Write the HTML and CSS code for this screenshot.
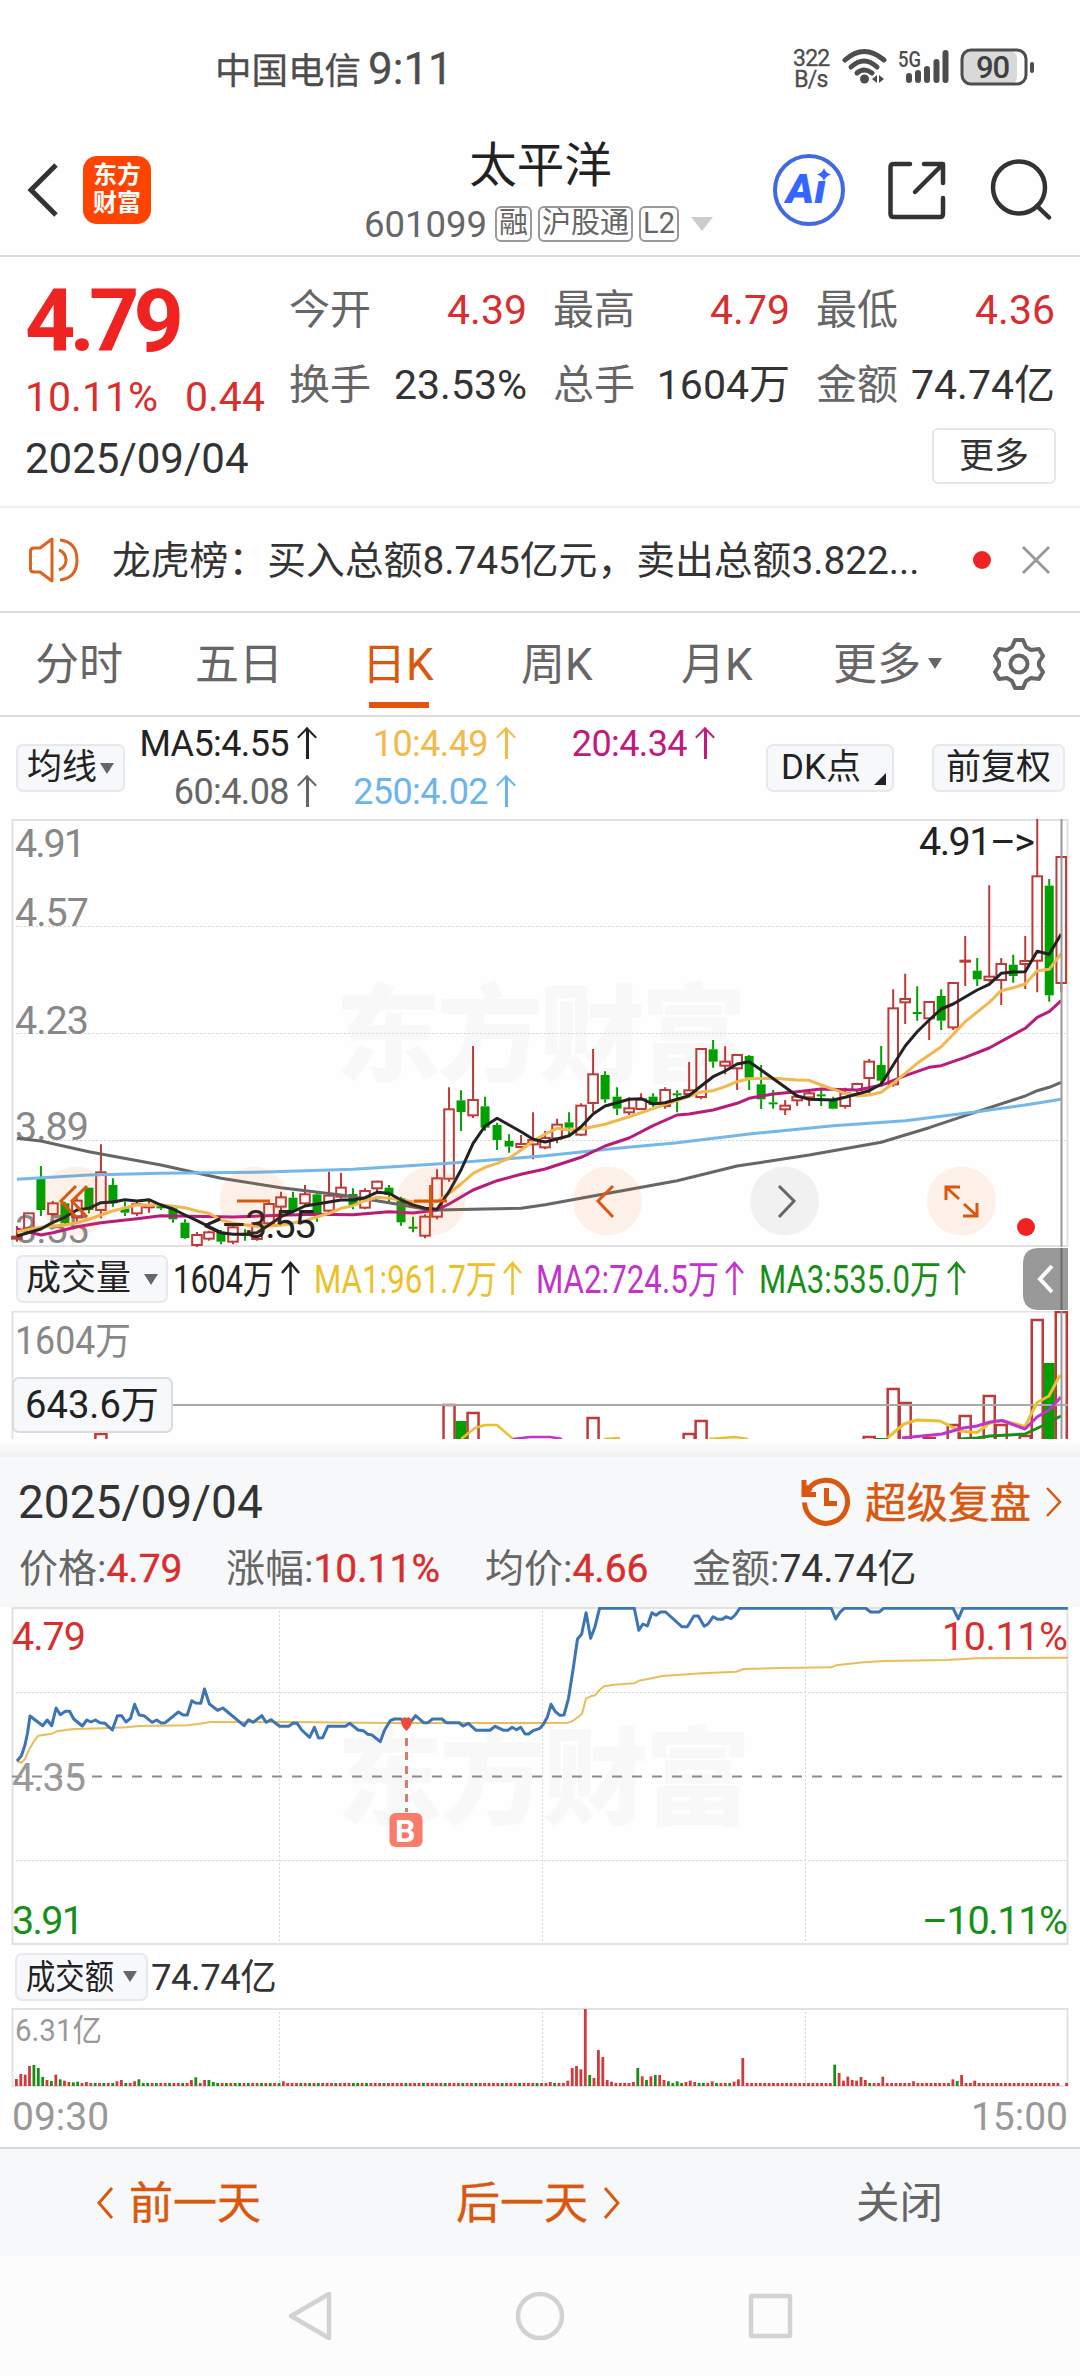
FILE: index.html
```html
<!DOCTYPE html>
<html lang="zh-CN">
<head>
<meta charset="utf-8">
<title>太平洋 601099</title>
<link rel="stylesheet" href="styles.css">
</head>
<body>
<div class="status">
 <span class="carrier">中国电信</span>
 <span class="clock">9:11</span>
 <span class="speed">322<br>B/s</span>
 <svg class="sysicons" width="200" height="44" viewBox="0 0 200 44">
  <g fill="none" stroke="#4d4d4d" stroke-width="5" stroke-linecap="round">
   <path d="M4 13 Q23 -4 43 13"/>
   <path d="M10 20 Q23 8 36 20"/>
   <path d="M16 26 Q23 20 31 26"/>
  </g>
  <circle cx="23.500" cy="32" r="4.500" fill="#4d4d4d"/>
  <path d="M31 32l5-4v8zM43 32l-5-4v8z" fill="#4d4d4d"/>
  <text class="net" x="57" y="20" textLength="23" lengthAdjust="spacingAndGlyphs">5G</text>
  <g stroke="#4d4d4d" stroke-width="6" stroke-linecap="round">
   <path d="M68 29v4M77 26v7M86 22v11M95.500 15v18M104.500 6v27"/>
  </g>
  <rect x="122" y="4" width="54" height="33" rx="7" fill="#d9d9d9"/>
  <rect x="121" y="3" width="64" height="34" rx="9" fill="none" stroke="#4d4d4d" stroke-width="3"/>
  <rect x="189" y="15" width="4" height="11" rx="2" fill="#4d4d4d"/>
  <text class="batt" x="135" y="31" textLength="34">90</text>
 </svg>
</div>

<div class="header">
 <svg class="back" width="34" height="56" viewBox="0 0 34 56"><path d="M30 3 L5 28 L30 53" fill="none" stroke="#333" stroke-width="5"/></svg>
 <div class="logo">东方<br>财富</div>
 <div class="title">
  <div class="name">太平洋</div>
  <div class="code">
   <span>601099</span>
   <i class="tag">融</i><i class="tag">沪股通</i><i class="tag">L2</i>
   <b class="down"></b>
  </div>
 </div>
 <svg class="tools" width="290" height="80" viewBox="0 0 290 80">
  <circle cx="40" cy="40" r="34" fill="none" stroke="#4169e1" stroke-width="4"/>
  <text class="ai" x="17" y="53" textLength="40" lengthAdjust="spacingAndGlyphs">Aı</text>
  <path d="M55 18 Q56.500 23 62 24.500 Q56.500 26 55 31 Q53.500 26 48 24.500 Q53.500 23 55 18z" fill="#3566ff"/>
  <g fill="none" stroke="#333" stroke-width="4.500" stroke-linecap="round" stroke-linejoin="round">
   <path d="M141 14H125Q121.500 14 121.500 17V64Q121.500 67 125 67H171Q174 67 174 64V48"/>
   <path d="M155 14H174V33M173 15L146 42"/>
   <circle cx="250" cy="37.500" r="26"/>
   <path d="M268 56L280 67.500"/>
  </g>
 </svg>
</div>

<div class="quote">
 <div class="last">
  <div class="price">4.79</div>
  <div class="change"><span>10.11%</span><span>0.44</span></div>
 </div>
 <div class="stats">
  <div class="stat"><span>今开</span><b class="up">4.39</b></div>
  <div class="stat"><span>最高</span><b class="up">4.79</b></div>
  <div class="stat"><span>最低</span><b class="up">4.36</b></div>
  <div class="stat"><span>换手</span><b>23.53%</b></div>
  <div class="stat"><span>总手</span><b>1604万</b></div>
  <div class="stat"><span>金额</span><b>74.74亿</b></div>
 </div>
 <div class="dateline"><span>2025/09/04</span><button class="more">更多</button></div>
</div>

<div class="notice">
 <svg width="54" height="50" viewBox="0 0 54 50" fill="none" stroke="#d9651f" stroke-width="3">
  <path d="M2.500 16Q2.500 13 6 13H12L24 4V46L12 37H6Q2.500 37 2.500 34z" stroke-linejoin="round"/>
  <path d="M31 15Q38 18 38 25Q38 32 31 35M32 5Q49 7 49 25Q49 43 32 45"/>
 </svg>
 <span class="noticetext">龙虎榜：买入总额8.745亿元，卖出总额3.822...</span>
 <b class="reddot"></b>
 <svg width="32" height="32" viewBox="0 0 32 32"><path d="M3 3L29 29M29 3L3 29" stroke="#999" stroke-width="3"/></svg>
</div>

<div class="tabs">
 <span>分时</span>
 <span>五日</span>
 <span class="active">日K</span>
 <span>周K</span>
 <span>月K</span>
 <span>更多<b class="small-down"></b></span>
 <svg width="54" height="54" viewBox="0 0 54 54" fill="none" stroke="#666" stroke-width="4" stroke-linejoin="round">
  <path d="M23 3H31L34 10L39 13L47 12L51 19L47 25V29L51 35L47 42L39 41L34 44L31 51H23L20 44L15 41L7 42L3 35L7 29V25L3 19L7 12L15 13L20 10z"/>
  <circle cx="27" cy="27" r="8.500"/>
 </svg>
</div>

<div class="indicator">
 <button class="chip">均线<b class="small-down"></b></button>
 <div class="averages">
  <span class="ma5">MA5:4.55<i></i></span>
  <span class="ma10">10:4.49<i></i></span>
  <span class="ma20">20:4.34<i></i></span>
  <span class="ma60">60:4.08<i></i></span>
  <span class="ma250">250:4.02<i></i></span>
 </div>
 <button class="chip dk">DK点<b class="corner"></b></button>
 <button class="chip fq">前复权</button>
</div>

<svg class="kchart" viewBox="0 819 1080 428" width="1080" height="428">
 <text class="mark" x="335" y="1073" textLength="412">东方财富</text>
 <path class="grid" d="M12 926.500H1068M12 1033.500H1068M12 1140.500H1068"/>
 <rect class="frame" x="12.500" y="820" width="1055" height="426"/>
 <g class="axis">
  <text x="15" y="857" textLength="71">4.91</text>
  <text x="15" y="926" textLength="74">4.57</text>
  <text x="15" y="1034" textLength="74">4.23</text>
  <text x="15" y="1140" textLength="74">3.89</text>
  <text x="15" y="1243" textLength="74">3.55</text>
 </g>
 <g id="candles"></g>
 <g id="lines"></g>
 <g class="axis dark">
  <text x="919" y="855" textLength="116">4.91–&gt;</text>
  <text x="203" y="1238" textLength="113">&lt;–3.55</text>
 </g>
 <g fill="#f5651a" fill-opacity=".09">
  <circle cx="76" cy="1201" r="34.500"/><circle cx="254" cy="1201" r="34.500"/><circle cx="431" cy="1201" r="34.500"/>
  <circle cx="607.500" cy="1201" r="34.500"/><circle cx="961.500" cy="1201" r="34.500"/>
 </g>
 <circle cx="784.500" cy="1201" r="34.500" fill="#000" fill-opacity=".05"/>
 <g fill="none" stroke="#d9580f" stroke-width="3">
  <path d="M76 1186L61 1201L76 1217M87 1186L72 1201L87 1217"/>
  <path d="M237 1201H270M414 1201H447M430.500 1185V1217"/>
  <path d="M613 1186L598 1201L613 1217"/>
  <path d="M946 1200V1187H960M947 1188L959 1199M963 1216H977V1203M976 1215L964 1204"/>
  <path d="M779 1186L794 1201L779 1217" stroke="#666"/>
 </g>
 <circle cx="1026" cy="1227" r="9" fill="#f02323"/>
 <path d="M1061.500 819V1247" stroke="#999" stroke-width="2"/>
</svg>

<div class="volhead">
 <button class="chip">成交量<b class="small-down"></b></button>
 <svg width="850" height="64" viewBox="170 1247 850 64">
  <g class="vals">
   <text x="173" y="1293" textLength="101" lengthAdjust="spacingAndGlyphs" fill="#222">1604万</text>
   <text x="314" y="1293" textLength="183" lengthAdjust="spacingAndGlyphs" fill="#ebc12a">MA1:961.7万</text>
   <text x="536" y="1293" textLength="183" lengthAdjust="spacingAndGlyphs" fill="#c333cb">MA2:724.5万</text>
   <text x="759" y="1293" textLength="182" lengthAdjust="spacingAndGlyphs" fill="#178e17">MA3:535.0万</text>
  </g>
  <g fill="none" stroke-width="2.500">
   <path stroke="#222" d="M290.500 1295V1264M282 1273L290.500 1263L299 1273"/>
   <path stroke="#ebc12a" d="M512.500 1295V1264M504 1273L512.500 1263L521 1273"/>
   <path stroke="#c333cb" d="M734.500 1295V1264M726 1273L734.500 1263L743 1273"/>
   <path stroke="#178e17" d="M956.500 1295V1264M948 1273L956.500 1263L965 1273"/>
  </g>
 </svg>
 <svg class="drawer" width="45" height="62" viewBox="0 0 45 62">
  <path d="M45 0H16Q0 0 0 16V46Q0 62 16 62H45z" fill="#999"/>
  <path d="M29 18L17 31L29 44" fill="none" stroke="#fff" stroke-width="4"/>
  <path d="M38.500 0V62" stroke="#6b6b6b" stroke-width="2"/>
 </svg>
</div>

<svg class="volchart" viewBox="0 1311 1080 128" width="1080" height="128">
 <path d="M12.500 1439V1311.500H1067.500V1439" class="frame"/>
 <text class="axis" x="15" y="1354" textLength="116" lengthAdjust="spacingAndGlyphs">1604万</text>
 <g id="volumes"></g>
 <path d="M170 1405H1068" stroke="#aaa" stroke-width="2"/>
 <g id="vollines"></g>
 <path d="M1061.500 1311V1439" stroke="#999" stroke-width="2"/>
 <rect x="13" y="1378" width="159" height="54" rx="6" fill="#f7f8fa" stroke="#d9dce0" stroke-width="2"/>
 <text class="axis dark" x="25" y="1418" textLength="134" lengthAdjust="spacingAndGlyphs">643.6万</text>
</svg>
<div class="shade"></div>

<div class="panel">
 <div class="panelhead">
  <span>2025/09/04</span>
  <a class="replay">
   <svg width="50" height="50" viewBox="0 0 50 50" fill="none" stroke="#d9580f" stroke-width="5">
    <path d="M3.500 25.500A21.500 21.500 0 1 0 7 13"/>
    <path d="M3 3V17.500H15M25.500 11V26.500H36"/>
    <path d="M3 17L9 10" stroke-width="7"/>
   </svg>
   <span>超级复盘</span>
   <svg width="18" height="30" viewBox="0 0 18 30"><path d="M2 1L15 15L2 29" fill="none" stroke="#d9580f" stroke-width="2.500"/></svg>
  </a>
 </div>
 <div class="panelvals">
  <span>价格:<b class="up">4.79</b></span>
  <span>涨幅:<b class="up">10.11%</b></span>
  <span>均价:<b class="up">4.66</b></span>
  <span>金额:<b>74.74亿</b></span>
 </div>
</div>

<svg class="daychart" viewBox="0 1607 1080 338" width="1080" height="338">
 <text class="mark" x="337" y="1816" textLength="414">东方财富</text>
 <path class="grid" d="M12 1692.500H1068M12 1860.500H1068M279.500 1607V1945M542.500 1607V1945M805.500 1607V1945"/>
 <path d="M12.500 1608H1067.500V1944H12.500z" class="frame"/>
 <path d="M12 1776.500H1068" stroke="#8c8c8c" stroke-width="2" stroke-dasharray="10 10"/>
 <g id="daylines"></g>
 <g class="axis">
  <text x="12" y="1650" textLength="74" fill="#d82e2e">4.79</text>
  <text x="12" y="1791" textLength="74" fill="#999">4.35</text>
  <text x="12" y="1934" textLength="72" fill="#178e17">3.91</text>
  <text x="942" y="1650" textLength="126" fill="#d82e2e">10.11%</text>
  <text x="922" y="1934" textLength="146" fill="#178e17">–10.11%</text>
 </g>
 <path d="M406.500 1738V1812" stroke="#dd7a6e" stroke-width="3" stroke-dasharray="8 6"/>
 <path d="M406.500 1731Q399 1724 402 1719Q404 1716 406.500 1718Q409 1716 411 1719Q414 1724 406.500 1731z" fill="#ee4a3b"/>
 <rect x="389.500" y="1813" width="33" height="34" rx="6" fill="#f97b6a"/>
 <text class="buy" x="395" y="1842" textLength="22">B</text>
</svg>

<div class="amount">
 <button class="chip"><svg width="88" height="44" viewBox="0 0 88 44"><text class="sel" x="0" y="34" textLength="88" lengthAdjust="spacingAndGlyphs">成交额</text></svg><b class="small-down"></b></button>
 <span>74.74亿</span>
</div>
<svg class="amtchart" viewBox="0 2008 1080 79" width="1080" height="79">
 <path class="grid" d="M279.500 2008V2086M542.500 2008V2086M805.500 2008V2086"/>
 <rect class="frame" x="12.500" y="2009" width="1055" height="77"/>
 <text class="axis" x="15" y="2041" textLength="87" lengthAdjust="spacingAndGlyphs">6.31亿</text>
 <g id="amounts"></g>
</svg>
<div class="times"><span>09:30</span><span>15:00</span></div>

<div class="daynav">
 <a class="prev"><svg width="20" height="34" viewBox="0 0 20 34"><path d="M17 2L4 17L17 32" fill="none" stroke="#d9580f" stroke-width="3"/></svg><span>前一天</span></a>
 <a class="next"><span>后一天</span><svg width="20" height="34" viewBox="0 0 20 34"><path d="M3 2L16 17L3 32" fill="none" stroke="#d9580f" stroke-width="3"/></svg></a>
 <a class="close"><span>关闭</span></a>
</div>
<div class="sysnav">
 <svg width="48" height="52" viewBox="0 0 48 52"><path d="M43 4V48L5 26z"/></svg>
 <svg width="52" height="52" viewBox="0 0 52 52"><circle cx="26" cy="26" r="22"/></svg>
 <svg width="48" height="52" viewBox="0 0 48 52"><rect x="5" y="6" width="39" height="40" rx="1"/></svg>
</div>
<script src="chart.js"></script>
</body>
</html>
```

FILE: styles.css
```css
body {
 margin: 0;
 width: 1080px;
 background: #fefefe;
 color: #333;
 font-family: Roboto, "Noto Sans CJK SC", sans-serif;
}
svg {
 display: block;
 flex: none;
}
button {
 font-family: inherit;
 padding: 0;
 margin: 0;
}
b, i {
 font-weight: normal;
 font-style: normal;
}
span, a {
 white-space: nowrap;
}
.up {
 color: #d82e2e;
}
.status {
 height: 138px;
 box-sizing: border-box;
 padding-left: 215px;
 display: flex;
 align-items: center;
 color: #4d4d4d;
 -webkit-text-stroke: 0.3px;
}
.carrier {
 font-size: 36.5px;
 width: 153px;
 padding-bottom: 2px;
}
.clock {
 font-size: 44px;
 width: 425px;
}
.speed {
 font-size: 23px;
 line-height: 21px;
 letter-spacing: -0.8px;
 text-align: center;
 width: 36px;
 margin-right: 12px;
}
.sysicons {
 -webkit-text-stroke: 0;
}
.sysicons .net {
 font-size: 22px;
 font-weight: 500;
 fill: #4d4d4d;
}
.sysicons .batt {
 font-size: 31px;
 font-weight: 500;
 fill: #404040;
}
.header {
 height: 119px;
 border-bottom: 2px solid #ddd;
 display: flex;
 box-sizing: border-box;
}
.back {
 margin: 24px 0 0 26px;
}
.logo {
 width: 68px;
 height: 68px;
 margin: 18px 0 0 23px;
 box-sizing: border-box;
 padding-top: 5px;
 background: #ff4400;
 border-radius: 14px;
 color: #fff;
 font-size: 24px;
 line-height: 28px;
 font-weight: 700;
 text-align: center;
}
.title {
 width: 618px;
 box-sizing: border-box;
 padding-left: 213px;
 flex: none;
}
.name {
 font-size: 47.5px;
 line-height: 56px;
 width: 353px;
 text-align: center;
 color: #222;
}
.code {
 display: flex;
 align-items: center;
 height: 60px;
 color: #666;
 font-size: 36.5px;
}
.code span {
 width: 131px;
}
.tag {
 box-sizing: border-box;
 height: 36px;
 border: 2px solid #999;
 border-radius: 6px;
 font-size: 29px;
 line-height: 31px;
 padding: 0 2px;
 margin-right: 6px;
}
.down {
 border: 11px solid transparent;
 border-top: 14px solid #ccc;
 border-bottom: 0;
 margin-left: 6px;
}
.tools {
 margin: 12px 0 0 0;
}
.ai {
 font-size: 41px;
 font-weight: 900;
 font-style: italic;
 fill: #3566ff;
}
.quote {
 height: 251px;
 border-bottom: 2px solid #eee;
 box-sizing: border-box;
 display: grid;
 grid-template-columns: 264px 791px;
 grid-template-rows: 166px 80px;
 padding-left: 25px;
}
.price {
 font-size: 88px;
 font-weight: 700;
 letter-spacing: -6px;
 line-height: 88px;
 padding-top: 20px;
 color: #f02323;
}
.change {
 color: #d82e2e;
 font-size: 41px;
 line-height: 64px;
 display: flex;
}
.change span:first-child {
 width: 160px;
}
.stats {
 display: grid;
 grid-template-columns: 238px 237px 239px;
 grid-auto-rows: 75px;
 column-gap: 26px;
 padding-top: 16px;
}
.stat {
 display: flex;
 justify-content: space-between;
 align-items: baseline;
 font-size: 41px;
 line-height: 75px;
}
.stat span {
 color: #666;
}
.dateline {
 grid-column: 1 / 3;
 width: 1031px;
 display: flex;
 justify-content: space-between;
 font-size: 42px;
 line-height: 71px;
}
.more {
 width: 124px;
 height: 56px;
 margin-top: 5px;
 border: 2px solid #e6e6e6;
 border-radius: 6px;
 background: #fff;
 font-size: 35px;
 line-height: 49px;
 color: #333;
}
.notice {
 height: 105px;
 box-sizing: border-box;
 border-bottom: 2px solid #ddd;
 display: flex;
 align-items: center;
 padding-left: 28px;
}
.noticetext {
 font-size: 38.8px;
 margin-left: 30px;
 width: 861px;
 padding-bottom: 6px;
}
.reddot {
 width: 18px;
 height: 18px;
 border-radius: 50%;
 background: #f02323;
 margin-right: 29px;
}
.tabs {
 height: 104px;
 box-sizing: border-box;
 border-bottom: 2px solid #ddd;
 display: grid;
 grid-template-columns: 160px 167px 159px 160px 152px 159px 54px;
 align-items: center;
 padding-left: 35px;
 font-size: 44px;
 color: #666;
}
.tabs span {
 height: 102px;
 line-height: 105px;
}
.tabs .active {
 color: #d9580f;
 background: linear-gradient(#e3550f, #e3550f) 7px 89px / 60px 6px no-repeat;
}
.small-down {
 display: inline-block;
 border: 7px solid transparent;
 border-top: 11px solid #666;
 border-bottom: 0;
 margin-left: 7px;
 vertical-align: 11px;
}
.indicator {
 height: 102px;
 display: flex;
 align-items: center;
 padding-left: 16px;
}
.chip {
 box-sizing: border-box;
 height: 48px;
 border: 2px solid #e6e8ee;
 border-radius: 7px;
 background: #f7f8fa;
 color: #222;
 font-size: 35px;
 line-height: 40px;
 display: flex;
 align-items: center;
 justify-content: center;
 flex: none;
}
.indicator .chip {
 width: 109px;
}
.chip .small-down {
 margin-left: 3px;
}
.indicator .dk {
 width: 128px;
 position: relative;
 padding-right: 18px;
 margin-left: 51px;
}
.indicator .fq {
 width: 133px;
 margin-left: 38px;
}
.corner {
 position: absolute;
 right: 6px;
 bottom: 5px;
 border-left: 12px solid transparent;
 border-bottom: 12px solid #222;
}
.averages {
 display: grid;
 grid-template-columns: 192px 199px 199px;
 grid-auto-rows: 48px;
 font-size: 36px;
 letter-spacing: -0.6px;
}
.averages span {
 display: flex;
 justify-content: flex-end;
 align-items: center;
}
.averages i {
 width: 3px;
 height: 30px;
 margin: 0 8px 0 17px;
 background: currentColor;
 position: relative;
}
/* arrow head of the trend mark */
.averages i:after {
 content: "";
 position: absolute;
 left: -6px;
 top: 1px;
 width: 12px;
 height: 12px;
 border-left: 2.5px solid;
 border-top: 2.5px solid;
 transform: rotate(45deg);
}
.ma5 { color: #222; }
.ma10 { color: #f3b94b; }
.ma20 { color: #c01a7c; }
.ma60 { color: #666; }
.ma250 { color: #6cb5ea; }
.mark {
 font-size: 106px;
 font-weight: 900;
 fill: #f8f8f8;
}
.grid {
 stroke: #d6d6d6;
 stroke-width: 1;
 stroke-dasharray: 2 2;
 fill: none;
}
.frame {
 stroke: #e2e2e2;
 stroke-width: 2;
 fill: none;
}
.axis {
 font-size: 39.5px;
 fill: #888;
}
.amtchart .axis {
 font-size: 31px;
 fill: #999;
}
.volchart .axis {
 font-size: 38px;
}
.axis.dark, .dark {
 fill: #222;
}
.volhead {
 height: 64px;
 display: flex;
 align-items: center;
 padding-left: 16px;
}
.volhead .chip {
 width: 152px;
 margin-right: 2px;
}
.volhead .small-down {
 margin-left: 13px;
}
.volhead .drawer {
 margin-left: 3px;
}
.vals {
 font-size: 38.5px;
}
.sel {
 font-size: 34px;
 fill: #222;
}
text {
 white-space: pre;
}
.shade {
 height: 18px;
 background: linear-gradient(#fefefe, #f1f1f2);
}
.panel {
 height: 150px;
 background: #f7f8fa;
}
.panelhead {
 height: 90px;
 display: flex;
 align-items: center;
 justify-content: space-between;
 padding: 0 17px 0 18px;
 font-size: 46px;
}
.replay {
 display: flex;
 align-items: center;
 color: #d9580f;
 font-size: 41.5px;
 gap: 14px;
}
.replay span {
 padding-bottom: 5px;
 -webkit-text-stroke: 0.4px;
}
.panelvals {
 display: grid;
 grid-template-columns: 207px 259px 207px 300px;
 padding-left: 19px;
 font-size: 39px;
 line-height: 44px;
 color: #666;
}
.panelvals b {
 color: #333;
}
.panelvals .up {
 color: #d82e2e;
 -webkit-text-stroke: 0.4px;
}
.buy {
 font-size: 32px;
 font-weight: 700;
 fill: #fff;
}
.amount {
 height: 63px;
 display: flex;
 align-items: center;
 padding-left: 15px;
 font-size: 36.5px;
 letter-spacing: -0.5px;
}
.amount span {
 padding-bottom: 5px;
}
.amount .chip {
 width: 133px;
 margin-right: 3px;
}
.amount .small-down {
 margin-left: 9px;
}
.times {
 height: 60px;
 padding: 0 12px;
 display: flex;
 justify-content: space-between;
 align-items: center;
 font-size: 39px;
 color: #999;
}
.daynav {
 height: 109px;
 box-sizing: border-box;
 border-top: 2px solid #d9dadc;
 background: #f7f8fa;
 display: flex;
 align-items: center;
 font-size: 44px;
 color: #d9580f;
}
.daynav a {
 display: flex;
 align-items: center;
 gap: 14px;
}
.daynav span {
 padding-bottom: 6px;
 -webkit-text-stroke: 0.4px;
}
.prev {
 margin-left: 95px;
 width: 361px;
}
.next {
 width: 400px;
}
.daynav .close {
 color: #666;
 font-size: 43.5px;
}
.close span {
 -webkit-text-stroke: 0;
}
.sysnav {
 height: 120px;
 background: #fcfcfc;
 display: flex;
 justify-content: center;
 align-items: center;
 gap: 180px;
}
.sysnav svg {
 fill: none;
 stroke: #d2d2d2;
 stroke-width: 4.500;
 stroke-linejoin: round;
}
```

FILE: chart.js
```js
var RED = "#bd3a38", GREEN = "#00a000";

function add(id, html) {
  document.getElementById(id).innerHTML += html;
}
function line(id, pts, color, w) {
  add(id, '<polyline fill="none" stroke-linejoin="round" stroke="' + color + '" stroke-width="' + w + '" points="' + pts.join(" ") + '"/>');
}
// day index -> x
function kx(i) { return 16.9 + i * 12.004; }
// daily values are thirds of a pixel under the 810 line
function ky(v) { return 810 + v / 3; }

// direction, body top, body bottom, high, low
var days = [
  [1,1280,1286,1248,1295],[1,1210,1255,1210,1260],[0,1103,1200,1068,1218],[1,1180,1212,1173,1218],
  [0,1180,1240,1175,1243],[1,1172,1222,1165,1240],[0,1133,1200,1133,1210],[1,1087,1200,1003,1225],
  [0,1125,1180,1105,1190],[0,1195,1208,1175,1218],[1,1183,1210,1175,1218],[1,1185,1192,1170,1208],
  [0,1185,1195,1180,1200],[0,1195,1228,1190,1238],[0,1238,1284,1228,1286],[1,1275,1305,1266,1312],
  [1,1267,1286,1262,1292],[0,1265,1295,1260,1303],[1,1252,1295,1240,1303],[0,1272,1276,1258,1292],
  [1,1240,1287,1235,1292],[1,1182,1240,1175,1245],[1,1162,1190,1145,1200],[0,1163,1200,1145,1210],
  [1,1153,1180,1125,1190],[0,1153,1210,1145,1235],[1,1157,1202,1085,1208],[1,1133,1160,1088,1165],
  [0,1152,1185,1135,1198],[1,1143,1193,1135,1198],[1,1115,1135,1112,1145],[0,1133,1155,1125,1175],
  [0,1165,1237,1160,1247],[0,1250,1254,1220,1267],[1,1220,1277,1213,1285],[1,1105,1220,1078,1228],
  [1,898,1106,832,1115],[0,871,906,841,963],[1,870,916,708,924],[0,889,953,860,962],
  [0,945,990,938,1020],[0,993,1010,973,1028],[1,1002,1011,975,1014],[1,990,1003,907,1048],
  [1,984,1012,963,1018],[1,944,985,926,1000],[0,937,953,907,980],[1,887,974,880,978],
  [1,793,879,717,907],[0,795,868,784,878],[0,860,896,832,915],[1,895,907,862,915],
  [1,868,897,850,900],[0,860,885,850,890],[1,840,888,832,896],[0,850,852,841,907],
  [1,841,852,756,860],[1,717,861,714,868],[0,718,755,690,773],[1,755,767,709,793],
  [1,735,775,732,840],[0,738,803,735,840],[0,823,868,765,897],[0,877,880,840,896],
  [1,887,898,870,915],[1,860,871,852,888],[1,850,862,843,888],[0,853,857,835,888],
  [0,868,896,860,898],[1,850,888,833,896],[1,822,840,818,848],[1,755,804,747,850],
  [0,765,812,708,820],[1,595,823,538,830],[1,567,577,491,642],[0,606,610,529,632],
  [1,576,625,573,690],[0,558,632,538,660],[1,519,652,516,660],[1,452,455,378,528],
  [0,482,508,444,528],[1,500,510,226,515],[1,462,510,444,585],[0,464,498,434,518],
  [1,453,462,378,537],[1,199,452,27,547],[0,227,556,207,575],[1,141,519,141,547]
];
days.forEach(function (d, i) {
  var x = kx(i), t = ky(d[1]), b = ky(d[2]), c = d[0] ? RED : GREEN;
  var s = '<path fill="none" stroke-width="2" stroke="' + c + '" d="M' + x + " " + ky(d[3]) + "V" + t + "M" + x + " " + b + "V" + ky(d[4]) + '"/>';
  if (d[0]) s += '<rect fill="none" stroke-width="2" stroke="' + c + '" x="' + (x - 4.8) + '" y="' + t + '" width="9.6" height="' + (b - t) + '"/>';
  else s += '<rect fill="' + c + '" x="' + (x - 4.5) + '" y="' + t + '" width="9" height="' + Math.max(b - t, 2) + '"/>';
  add("candles", s);
});

// pairs of day index, height
function average(list, color) {
  var p = [];
  for (var i = 0; i < list.length; i += 2) p.push(kx(list[i]).toFixed(1) + "," + ky(list[i + 1]).toFixed(1));
  line("lines", p, color, 3);
}
average([0,985,2,993,6,1025,12,1065,17,1105,22,1133,27,1155,31,1178,34,1197,35,1200,39,1197,42,1195,44,1184,48,1158,55,1112,60,1068,66,1035,72,997,76,953,80,905,84,858,85,842,86,832,87,817], "#666");
average([0,1108,6,1095,12,1090,20,1087,28,1078,36,1060,44,1037,50,1015,55,998,61,972,68,947,74,932,80,905,84,885,87,868], "#74b7e8");
average([0,1257,2,1275,3,1268,5,1250,7,1238,10,1226,12,1217,18,1221,22,1216,25,1213,28,1214,31,1205,33,1209,35,1200,36,1182,38,1140,40,1112,42,1093,44,1077,47,1042,49,1008,51,984,53,947,55,915,56,912,58,900,60,880,61,865,63,852,65,845,67,837,70,840,72,826,74,797,76,772,77,767,79,742,81,714,84,655,85,622,86,605,87,572], "#b81c7a");
average([0,1265,2,1252,4,1245,5,1238,6,1228,7,1215,8,1203,9,1193,10,1185,12,1184,14,1193,15,1203,16,1210,17,1230,18,1240,20,1249,22,1246,24,1232,26,1210,27,1195,28,1187,29,1172,30,1162,31,1165,33,1175,35,1175,36,1150,37,1122,38,1090,39,1072,40,1060,41,1045,42,1020,43,993,44,972,45,955,46,960,47,958,49,943,51,920,53,896,55,872,57,846,58,842,59,830,60,815,61,806,63,805,65,810,66,811,67,825,69,850,70,858,71,855,72,847,73,820,75,760,76,735,77,710,79,635,81,577,82,542,83,533,84,522,85,482,86,478,87,430], "#f0b84e");
average([0,1278,2,1257,3,1237,4,1222,5,1200,6,1195,7,1178,8,1176,9,1169,10,1173,11,1169,12,1185,13,1197,14,1215,15,1232,16,1250,17,1268,18,1273,19,1273,20,1268,21,1245,22,1220,23,1205,24,1188,26,1176,27,1170,28,1170,29,1163,30,1147,31,1150,32,1170,33,1185,34,1195,35,1198,36,1145,37,1080,38,1000,39,948,40,925,41,945,42,965,43,988,44,996,45,987,46,977,47,950,48,912,49,888,50,878,51,868,52,866,53,882,54,878,56,857,57,828,58,800,59,783,60,762,61,755,62,780,64,832,65,858,66,868,68,870,69,862,71,842,72,822,73,765,74,708,75,665,76,630,77,597,78,582,80,540,81,523,82,490,83,486,84,485,85,424,86,433,87,372], "#222");

// day index, top, direction; shorter days are below the cut
[[7,1434,1],[36,1405,1],[37,1421,0],[38,1413,1],[48,1418,1],[56,1434,1],[57,1421,1],[71,1437,1],[72,1438,0],
 [73,1389,1],[74,1403,1],[76,1438,1],[78,1425,1],[79,1416,1],[81,1396,1],[82,1425,1],[84,1436,1],[85,1320,1],[86,1363,0],[87,1312,1]].forEach(function (v) {
  var x = kx(v[0]);
  if (v[2]) add("volumes", '<rect fill="none" stroke="' + RED + '" stroke-width="2.5" x="' + (x - 5.5) + '" y="' + v[1] + '" width="11" height="150"/>');
  else add("volumes", '<rect fill="' + GREEN + '" x="' + (x - 5.5) + '" y="' + v[1] + '" width="11" height="150"/>');
});
line("vollines", ["461,1439","475,1428","485,1425","497,1425","513,1439"], "#e9c02f", 2.6);
line("vollines", ["604,1439","620,1438"], "#e9c02f", 2.6);
line("vollines", ["709,1439","735,1437","748,1439"], "#e9c02f", 2.6);
line("vollines", ["513,1439","530,1437","550,1437","562,1439"], "#c333cb", 2.6);
line("vollines", ["887.500,1438","904,1424","917,1420","940,1421","960,1431","977,1432.500","990,1423","1002,1420.500","1025,1426.500","1037,1402.500","1049,1396","1060,1375"], "#e9c02f", 3);
line("vollines", ["902,1438","942,1434","963,1428","977,1426","990,1422","1002,1420.500","1025,1429","1037,1417","1049,1410","1061,1397"], "#c333cb", 3);
line("vollines", ["960,1439","977,1438","990,1436","1025,1434","1042,1426","1061,1416"], "#178e17", 3);

// pairs in chart units, second half of the day starts at 1568
function day(list, color, w) {
  var p = [];
  for (var i = 0; i < list.length; i += 2) p.push((list[i] / 2.904).toFixed(1) + "," + (1590 + list[i + 1] / 3).toFixed(1));
  line("daylines", p, color, w);
}
function shift(list) {
  return list.map(function (v, i) { return i % 2 ? v : v + 1568; });
}
day([49,513,62,518,72,508,85,478,98,455,111,437,150,431,165,424,215,417,300,415,365,412,405,408,545,406,575,402,610,396,850,396,1130,399,1568,399].concat(shift([83,398,96,392,122,372,134,325,147,319,160,316,173,300,186,289,215,284,274,280,287,272,325,265,355,258,470,250,570,245,592,237,700,234,846,232,860,226,940,217,1000,213,1180,210,1270,205,1533,203])), "#e9bd5a", 2);
day([49,513,62,498,72,467,80,430,87,378,124,407,137,390,150,407,163,354,175,374,190,364,202,364,214,387,239,408,252,390,264,396,277,390,290,398,305,400,326,420,341,377,353,377,366,396,379,385,391,343,404,375,418,377,442,397,455,390,468,399,480,398,518,366,532,375,544,375,557,332,568,339,583,340,594,297,608,342,632,361,647,354,709,407,722,389,735,397,760,377,773,397,787,389,812,409,838,409,852,399,863,400,876,420,899,442,913,412,925,444,937,443,952,409,1003,409,1016,400,1040,420,1055,422,1068,433,1080,435,1104,455,1117,420,1133,392,1145,387,1165,387,1180,410,1195,392,1207,377,1230,398,1243,398,1256,387,1283,387,1296,398,1333,398,1345,408,1360,400,1383,421,1423,421,1438,409,1463,421,1475,421,1487,412,1500,419,1512,412,1525,432,1535,432,1548,422].concat(shift([0,415,10,403,22,380,32,343,45,365,58,376,70,375,83,325,96,240,109,147,121,133,134,68,147,145,160,110,173,55,274,55,287,121,299,102,312,108,325,68,337,76,350,66,365,66,412,110,428,110,447,78,460,78,477,109,488,102,503,80,516,88,530,88,540,80,555,86,567,75,580,55,846,55,859,87,872,66,884,55,946,55,960,66,985,66,998,55,1200,55,1215,87,1228,55,1533,55])), "#3c74b4", 3);

// minute turnover in thirds of a pixel, negative is a falling minute
var minutes = {
  0:21,1:36,2:34,3:60,4:-63,5:-54,6:-27,7:18,8:-15,9:34,10:-20,11:16,12:12,13:-11,14:-13,15:9,16:12,23:14,24:18,27:14,28:-20,
  40:18,41:-26,43:18,44:-18,45:-12,61:14,122:12,126:16,127:54,128:60,129:50,130:231,131:-33,132:24,133:108,134:87,135:18,136:13,
  141:12,142:-54,143:29,144:-18,145:29,146:-33,147:33,148:18,149:-14,150:-9,151:-14,152:-9,153:12,154:16,155:12,156:-9,157:-9,
  159:14,160:-9,164:13,165:20,166:84,187:-64,188:39,189:16,190:28,191:18,192:16,193:27,194:18,195:-9,198:28,205:14,
  214:20,215:-15,216:33,219:16
};
var falling = [18,20,22,25,29,30,32,35,38,46,48,50,51,53,56,58,60,65,67,69,73,77,78,80,84,89,93,98,102,105,111,115,119,123,163];
for (var m = 0; m < 241; m++) {
  if (m == 239) continue;
  var v = minutes[m] || (falling.indexOf(m) >= 0 ? -9 : 9);
  var h = Math.abs(v) / 3;
  add("amounts", '<rect fill="' + (v < 0 ? "#178e17" : "#d03a3a") + '" x="' + (15 + m * 4.376).toFixed(1) + '" y="' + (2086 - h) + '" width="2.8" height="' + h + '"/>');
}
```
